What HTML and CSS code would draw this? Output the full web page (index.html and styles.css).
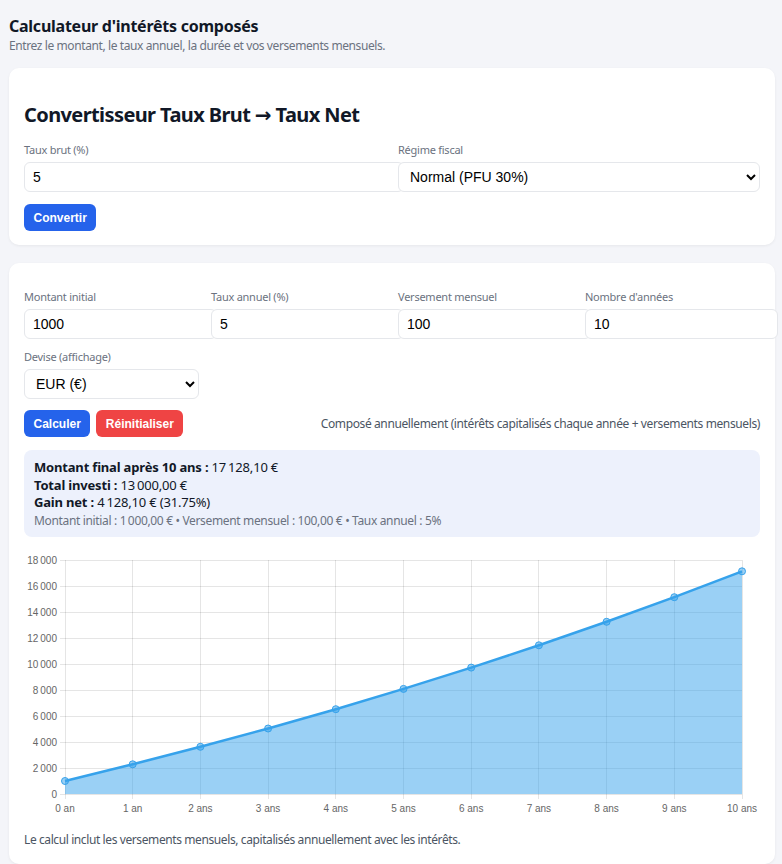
FILE: index.html
```html
<!DOCTYPE html>
<html lang="fr">
<head>
<meta charset="utf-8">
<title>Calculateur d'intérêts composés</title>
<link rel="stylesheet" href="styles.css">
</head>
<body>
<div class="page">
  <header class="head">
    <h1 class="title">Calculateur d'intérêts composés</h1>
    <p class="subtitle">Entrez le montant, le taux annuel, la durée et vos versements mensuels.</p>
  </header>

  <section class="card card-convert">
    <h2 class="card-title">Convertisseur Taux Brut → Taux Net</h2>
    <div class="grid grid-2">
      <div class="field">
        <label class="label">Taux brut (%)</label>
        <input class="input" type="text" value="5">
      </div>
      <div class="field">
        <label class="label">Régime fiscal</label>
        <select class="select">
          <option>Normal (PFU 30%)</option>
        </select>
      </div>
    </div>
    <div class="actions">
      <button class="btn btn-blue">Convertir</button>
    </div>
  </section>

  <section class="card card-calc">
    <div class="grid grid-4">
      <div class="field">
        <label class="label">Montant initial</label>
        <input class="input" type="text" value="1000">
      </div>
      <div class="field">
        <label class="label">Taux annuel (%)</label>
        <input class="input" type="text" value="5">
      </div>
      <div class="field">
        <label class="label">Versement mensuel</label>
        <input class="input" type="text" value="100">
      </div>
      <div class="field">
        <label class="label">Nombre d'années</label>
        <input class="input" type="text" value="10">
      </div>
      <div class="field field-currency">
        <label class="label">Devise (affichage)</label>
        <select class="select">
          <option>EUR (€)</option>
        </select>
      </div>
    </div>

    <div class="toolbar">
      <div class="btn-group">
        <button class="btn btn-blue">Calculer</button>
        <button class="btn btn-red">Réinitialiser</button>
      </div>
      <span class="hint">Composé annuellement (intérêts capitalisés chaque année + versements mensuels)</span>
    </div>

    <div class="result">
      <div class="result-line"><strong>Montant final après 10 ans :</strong> 17&#8239;128,10 €</div>
      <div class="result-line"><strong>Total investi :</strong> 13&#8239;000,00 €</div>
      <div class="result-line"><strong>Gain net :</strong> 4&#8239;128,10 € (31.75%)</div>
      <div class="result-meta">Montant initial : 1&#8239;000,00 € • Versement mensuel : 100,00 € • Taux annuel : 5%</div>
    </div>

    <div class="chart">
      <svg class="chart-svg" width="736" height="268" viewBox="0 0 736 268">
        <g class="grid-lines" stroke="rgba(0,0,0,0.1)" stroke-width="1">
          <line x1="36" y1="8.5" x2="718" y2="8.5"/>
          <line x1="36" y1="34.5" x2="718" y2="34.5"/>
          <line x1="36" y1="60.5" x2="718" y2="60.5"/>
          <line x1="36" y1="86.5" x2="718" y2="86.5"/>
          <line x1="36" y1="112.5" x2="718" y2="112.5"/>
          <line x1="36" y1="138.5" x2="718" y2="138.5"/>
          <line x1="36" y1="164.5" x2="718" y2="164.5"/>
          <line x1="36" y1="190.5" x2="718" y2="190.5"/>
          <line x1="36" y1="216.5" x2="718" y2="216.5"/>
          <line x1="36" y1="242.5" x2="718" y2="242.5"/>
          <line x1="41.5" y1="8" x2="41.5" y2="247"/>
          <line x1="108.5" y1="8" x2="108.5" y2="247"/>
          <line x1="176.5" y1="8" x2="176.5" y2="247"/>
          <line x1="244.5" y1="8" x2="244.5" y2="247"/>
          <line x1="311.5" y1="8" x2="311.5" y2="247"/>
          <line x1="379.5" y1="8" x2="379.5" y2="247"/>
          <line x1="447.5" y1="8" x2="447.5" y2="247"/>
          <line x1="514.5" y1="8" x2="514.5" y2="247"/>
          <line x1="582.5" y1="8" x2="582.5" y2="247"/>
          <line x1="650.5" y1="8" x2="650.5" y2="247"/>
          <line x1="718.5" y1="8" x2="718.5" y2="247"/>
        </g>
        <g class="y-labels">
          <text x="33" y="12">18&#8239;000</text>
          <text x="33" y="38">16&#8239;000</text>
          <text x="33" y="64">14&#8239;000</text>
          <text x="33" y="90">12&#8239;000</text>
          <text x="33" y="116">10&#8239;000</text>
          <text x="33" y="142">8&#8239;000</text>
          <text x="33" y="168">6&#8239;000</text>
          <text x="33" y="194">4&#8239;000</text>
          <text x="33" y="220">2&#8239;000</text>
          <text x="33" y="246">0</text>
        </g>
        <g class="x-labels">
          <text x="41" y="260">0 an</text>
          <text x="108.7" y="260">1 an</text>
          <text x="176.4" y="260">2 ans</text>
          <text x="244.1" y="260">3 ans</text>
          <text x="311.8" y="260">4 ans</text>
          <text x="379.5" y="260">5 ans</text>
          <text x="447.2" y="260">6 ans</text>
          <text x="514.9" y="260">7 ans</text>
          <text x="582.6" y="260">8 ans</text>
          <text x="650.3" y="260">9 ans</text>
          <text x="718" y="260">10 ans</text>
        </g>
        <path class="area" d="M41 229 L108.7 212.3 L176.4 194.8 L244.1 176.5 L311.8 157.2 L379.5 136.9 L447.2 115.6 L514.9 93.3 L582.6 69.8 L650.3 45.2 L718 19.3 L718 242 L41 242 Z"/>
        <polyline class="line" points="41,229 108.7,212.3 176.4,194.8 244.1,176.5 311.8,157.2 379.5,136.9 447.2,115.6 514.9,93.3 582.6,69.8 650.3,45.2 718,19.3"/>
        <g class="points">
          <circle cx="41" cy="229" r="3.5"/>
          <circle cx="108.7" cy="212.3" r="3.5"/>
          <circle cx="176.4" cy="194.8" r="3.5"/>
          <circle cx="244.1" cy="176.5" r="3.5"/>
          <circle cx="311.8" cy="157.2" r="3.5"/>
          <circle cx="379.5" cy="136.9" r="3.5"/>
          <circle cx="447.2" cy="115.6" r="3.5"/>
          <circle cx="514.9" cy="93.3" r="3.5"/>
          <circle cx="582.6" cy="69.8" r="3.5"/>
          <circle cx="650.3" cy="45.2" r="3.5"/>
          <circle cx="718" cy="19.3" r="3.5"/>
        </g>
      </svg>
    </div>

    <p class="note">Le calcul inclut les versements mensuels, capitalisés annuellement avec les intérêts.</p>
  </section>
</div>
</body>
</html>
```

FILE: styles.css
```css
* { box-sizing: content-box; }

html, body {
  margin: 0;
  padding: 0;
  background: #f4f5f9;
}

body {
  font-family: "Noto Sans", "Open Sans", "DejaVu Sans", sans-serif;
  color: #111827;
}

.page {
  width: 766px;
  padding: 14px 0 0 9px;
}

.head { margin-bottom: 14px; }

.title {
  margin: 0;
  font-size: 16px;
  line-height: 24px;
  font-weight: 700;
  letter-spacing: -0.25px;
  color: #111827;
}

.subtitle {
  margin: 0;
  font-size: 12px;
  line-height: 16px;
  letter-spacing: -0.4px;
  color: #6b7280;
}

.card {
  background: #ffffff;
  border-radius: 10px;
  box-shadow: 0 1px 3px rgba(0, 0, 0, 0.06);
  padding: 15px;
}

.card-convert {
  padding-bottom: 14px;
  margin-bottom: 18px;
}

.card-calc {
  padding-top: 26px;
  padding-bottom: 16px;
}

.card-title {
  margin: 18px 0 14px;
  font-size: 20px;
  line-height: 27px;
  font-weight: 700;
  letter-spacing: -0.6px;
  color: #111827;
}

.grid { display: grid; column-gap: 12px; }
.grid-2 { grid-template-columns: 1fr 1fr; }
.grid-4 { grid-template-columns: repeat(4, 1fr); row-gap: 10px; }

.field { display: flex; flex-direction: column; min-width: 0; }

.label {
  font-size: 11px;
  line-height: 16px;
  letter-spacing: -0.25px;
  color: #6b7280;
  margin-bottom: 4px;
}

.input {
  width: 100%;
  height: 16px;
  padding: 6px 8px;
  font-family: "Liberation Sans", Arial, sans-serif;
  font-size: 14px;
  color: #000;
  border: 1px solid #e5e7eb;
  border-radius: 6px;
  background: #fff;
  outline: none;
}

.select {
  box-sizing: border-box;
  width: 100%;
  height: 30px;
  padding: 0 6px 0 7px;
  font-family: "Liberation Sans", Arial, sans-serif;
  font-size: 14px;
  color: #000;
  border: 1px solid #e5e7eb;
  border-radius: 6px;
  background: #fff;
}

.actions { margin-top: 12px; }

.btn {
  height: 27px;
  padding: 0 9.5px;
  border: none;
  border-radius: 6px;
  font-family: "Liberation Sans", Arial, sans-serif;
  font-size: 12px;
  font-weight: 700;
  color: #fff;
  cursor: pointer;
}

.btn-blue { background: #2563eb; }
.btn-red { background: #ef4444; }

.toolbar {
  display: flex;
  justify-content: space-between;
  align-items: center;
  margin-top: 11px;
}

.btn-group { display: flex; gap: 6px; }

.hint {
  font-size: 12px;
  letter-spacing: -0.38px;
  color: #4b5563;
}

.result {
  margin-top: 13px;
  background: #edf1fc;
  border-radius: 8px;
  padding: 9px 10px 8px;
  font-size: 13px;
  line-height: 17.5px;
  letter-spacing: -0.18px;
  color: #111827;
}

.result-meta {
  font-size: 12px;
  line-height: 17px;
  letter-spacing: -0.34px;
  color: #6b7280;
}

.chart { margin-top: 15px; height: 268px; }

.chart-svg { display: block; }

.y-labels text {
  font-family: "Liberation Sans", Arial, sans-serif;
  font-size: 10px;
  fill: #666;
  text-anchor: end;
}

.x-labels text {
  font-family: "Liberation Sans", Arial, sans-serif;
  font-size: 10px;
  fill: #666;
  text-anchor: middle;
}

.area { fill: rgba(54, 162, 235, 0.5); }

.line {
  fill: none;
  stroke: #36a2eb;
  stroke-width: 2.5;
  stroke-linejoin: round;
}

.points circle {
  fill: rgba(54, 162, 235, 0.5);
  stroke: #36a2eb;
  stroke-width: 1;
}

.note {
  margin: 12px 0 0;
  font-size: 12px;
  line-height: 16px;
  letter-spacing: -0.4px;
  color: #4b5563;
}
```
